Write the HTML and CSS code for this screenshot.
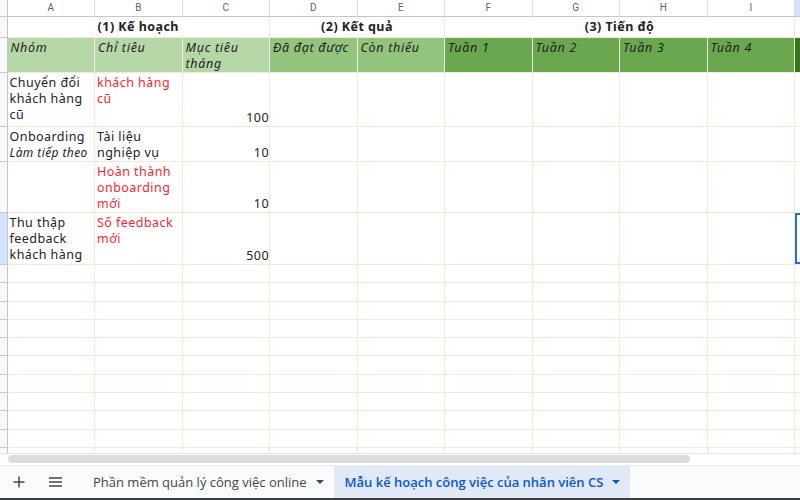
FILE: index.html
```html
<!DOCTYPE html>
<html lang="vi">

<head>
    <meta charset="UTF-8">
    <meta name="viewport" content="width=device-width, initial-scale=1.0">
    <title>Mẫu kế hoạch công việc của nhân viên CS</title>
    <link rel="stylesheet" href="styles.css">
</head>

<body>
    <div class="app">
        <div class="sheet-wrap">
            <div class="sheet">
                <!-- column headers -->
                <div class="corner"></div>
                <div class="col-head">A</div>
                <div class="col-head">B</div>
                <div class="col-head">C</div>
                <div class="col-head">D</div>
                <div class="col-head">E</div>
                <div class="col-head">F</div>
                <div class="col-head">G</div>
                <div class="col-head">H</div>
                <div class="col-head">I</div>
                <div class="col-head col-head-active"></div>

                <!-- row 1 -->
                <div class="row-head"></div>
                <div class="cell group span-3">(1) Kế hoạch</div>
                <div class="cell group span-2">(2) Kết quả</div>
                <div class="cell group span-4">(3) Tiến độ</div>
                <div class="cell"></div>

                <!-- row 2 -->
                <div class="row-head"></div>
                <div class="cell th th-plan">Nhóm</div>
                <div class="cell th th-plan">Chỉ tiêu</div>
                <div class="cell th th-plan">Mục tiêu tháng</div>
                <div class="cell th th-result">Đã đạt được</div>
                <div class="cell th th-result">Còn thiếu</div>
                <div class="cell th th-week">Tuần 1</div>
                <div class="cell th th-week">Tuần 2</div>
                <div class="cell th th-week">Tuần 3</div>
                <div class="cell th th-week">Tuần 4</div>
                <div class="cell th th-dark"></div>

                <!-- row 3 -->
                <div class="row-head"></div>
                <div class="cell">Chuyển đổi khách hàng cũ</div>
                <div class="cell red">khách hàng cũ</div>
                <div class="cell num">100</div>
                <div class="cell"></div><div class="cell"></div><div class="cell"></div><div class="cell"></div><div class="cell"></div><div class="cell"></div><div class="cell"></div>

                <!-- row 4 -->
                <div class="row-head"></div>
                <div class="cell">Onboarding<br><span class="note">Làm tiếp theo</span></div>
                <div class="cell">Tài liệu nghiệp vụ</div>
                <div class="cell num">10</div>
                <div class="cell"></div><div class="cell"></div><div class="cell"></div><div class="cell"></div><div class="cell"></div><div class="cell"></div><div class="cell"></div>

                <!-- row 5 -->
                <div class="row-head"></div>
                <div class="cell"></div>
                <div class="cell red">Hoàn thành onboarding mới</div>
                <div class="cell num">10</div>
                <div class="cell"></div><div class="cell"></div><div class="cell"></div><div class="cell"></div><div class="cell"></div><div class="cell"></div><div class="cell"></div>

                <!-- row 6 -->
                <div class="row-head row-head-active"></div>
                <div class="cell">Thu thập feedback khách hàng</div>
                <div class="cell red">Số feedback mới</div>
                <div class="cell num">500</div>
                <div class="cell"></div><div class="cell"></div><div class="cell"></div><div class="cell"></div><div class="cell"></div><div class="cell"></div><div class="cell selected"></div>
            </div>
            <div class="sheet sheet-empty" id="empty-rows"></div>
        </div>

        <div class="scroll-track">
            <div class="scroll-thumb"></div>
        </div>

        <div class="tabbar">
            <span class="tab-btn">
                <svg width="14" height="14" viewBox="0 0 14 14"><path d="M7 1.5v11M1.5 7h11" stroke="#444746" stroke-width="1.5" fill="none"/></svg>
            </span>
            <span class="tab-btn">
                <svg width="15" height="12" viewBox="0 0 15 12"><path d="M1 2h13M1 6h13M1 10h13" stroke="#444746" stroke-width="1.6" fill="none"/></svg>
            </span>
            <span class="tab">
                Phần mềm quản lý công việc online
                <span class="caret"></span>
            </span>
            <span class="tab tab-active">
                Mẫu kế hoạch công việc của nhân viên CS
                <span class="caret"></span>
            </span>
        </div>
    </div>

    <script>
        // blank rows below the data
        var empty = document.getElementById("empty-rows");
        for (var r = 0; r < 11; r++) {
            var head = document.createElement("div");
            head.className = "row-head";
            empty.append(head);
            for (var c = 0; c < 10; c++) {
                var cell = document.createElement("div");
                cell.className = "cell";
                empty.append(cell);
            }
        }
    </script>
</body>

</html>
```

FILE: styles.css
```css
body {
    margin: 0;
    width: 800px;
    height: 500px;
    overflow: hidden;
    background: #fff;
    font-family: "Noto Sans", "Open Sans", sans-serif;
}

.app {
    display: flex;
    flex-direction: column;
    height: 500px;
}

.sheet-wrap {
    flex: 1;
    overflow: hidden;
}

.sheet {
    display: grid;
    grid-template-columns: 7.5px repeat(10, 87.5px);
    grid-template-rows: 17px 21px 35px 54px 35px 51px 52px;
    width: 882.5px;
    color: #222;
    font-size: 12.5px;
    line-height: 16px;
    letter-spacing: 0.45px;
}

.sheet-empty {
    grid-template-rows: repeat(11, 18.3px);
}

.corner,
.row-head {
    background: #f8f9fa;
    border-right: 1px solid #c4c7c5;
    border-bottom: 1px solid #c4c7c5;
    box-sizing: border-box;
}

.row-head-active {
    background: #d3e3fd;
}

.col-head {
    background: #fff;
    border-right: 1px solid #dadce0;
    border-bottom: 1px solid #c4c7c5;
    box-sizing: border-box;
    color: #5f6368;
    font-family: "Roboto", "Liberation Sans", sans-serif;
    font-size: 10px;
    letter-spacing: 0;
    line-height: 16px;
    text-align: center;
}

.col-head-active {
    background: #d3e3fd;
}

.cell {
    border-right: 1px solid #fde6d2;
    border-bottom: 1px solid #fde6d2;
    box-sizing: border-box;
    padding: 2px 2px 0 2px;
    overflow: hidden;
    word-wrap: break-word;
}

.group {
    font-weight: bold;
    text-align: center;
    line-height: 19px;
    padding: 0;
}

.span-3 {
    grid-column: span 3;
}

.span-2 {
    grid-column: span 2;
}

.span-4 {
    grid-column: span 4;
}

.th {
    font-style: italic;
    padding: 2px 3px 0 3px;
    letter-spacing: 0.7px;
    border-right-color: #e8f1e2;
}

.th-plan {
    background: #b6d7a8;
}

.th-result {
    background: #93c47d;
}

.th-week {
    background: #6aa84f;
}

.th-dark {
    background: #38761d;
}

.red {
    color: #ff1f33;
}

.num {
    display: flex;
    align-items: flex-end;
    justify-content: flex-end;
    padding: 0;
}

.note {
    font-style: italic;
    font-size: 12px;
    letter-spacing: 0.4px;
}

.selected {
    box-shadow: inset 2px 0 0 #1a73e8, inset 0 2px 0 #1a73e8, inset 0 -2px 0 #1a73e8;
}

.scroll-track {
    height: 10px;
    border-top: 1px solid #e3e3e3;
    background: #fff;
    padding: 1px 0 0 8px;
}

.scroll-thumb {
    width: 682px;
    height: 8px;
    border-radius: 4px;
    background: #dadce0;
}

.tabbar {
    display: flex;
    align-items: center;
    height: 32px;
    border-top: 1px solid #eaecef;
    border-bottom: 2px solid #3c4043;
    background: #f9fbfd;
    font-family: "Open Sans", "Liberation Sans", sans-serif;
    font-size: 13px;
    color: #444746;
}

.tab-btn {
    display: flex;
    align-items: center;
    justify-content: center;
    width: 36px;
    height: 32px;
}

.tab-btn:first-child {
    margin-left: 1px;
}

.tab {
    display: flex;
    align-items: center;
    height: 32px;
    padding: 0 10px 0 20px;
    white-space: nowrap;
    font-weight: 500;
}

.tab-active {
    background: #e1e9f7;
    color: #0b57d0;
    padding-left: 11px;
    font-weight: 600;
}

.caret {
    width: 0;
    height: 0;
    margin-left: 9px;
    border-left: 4px solid transparent;
    border-right: 4px solid transparent;
    border-top: 4px solid #444746;
}

.tab-active .caret {
    border-top-color: #0b57d0;
}
```
